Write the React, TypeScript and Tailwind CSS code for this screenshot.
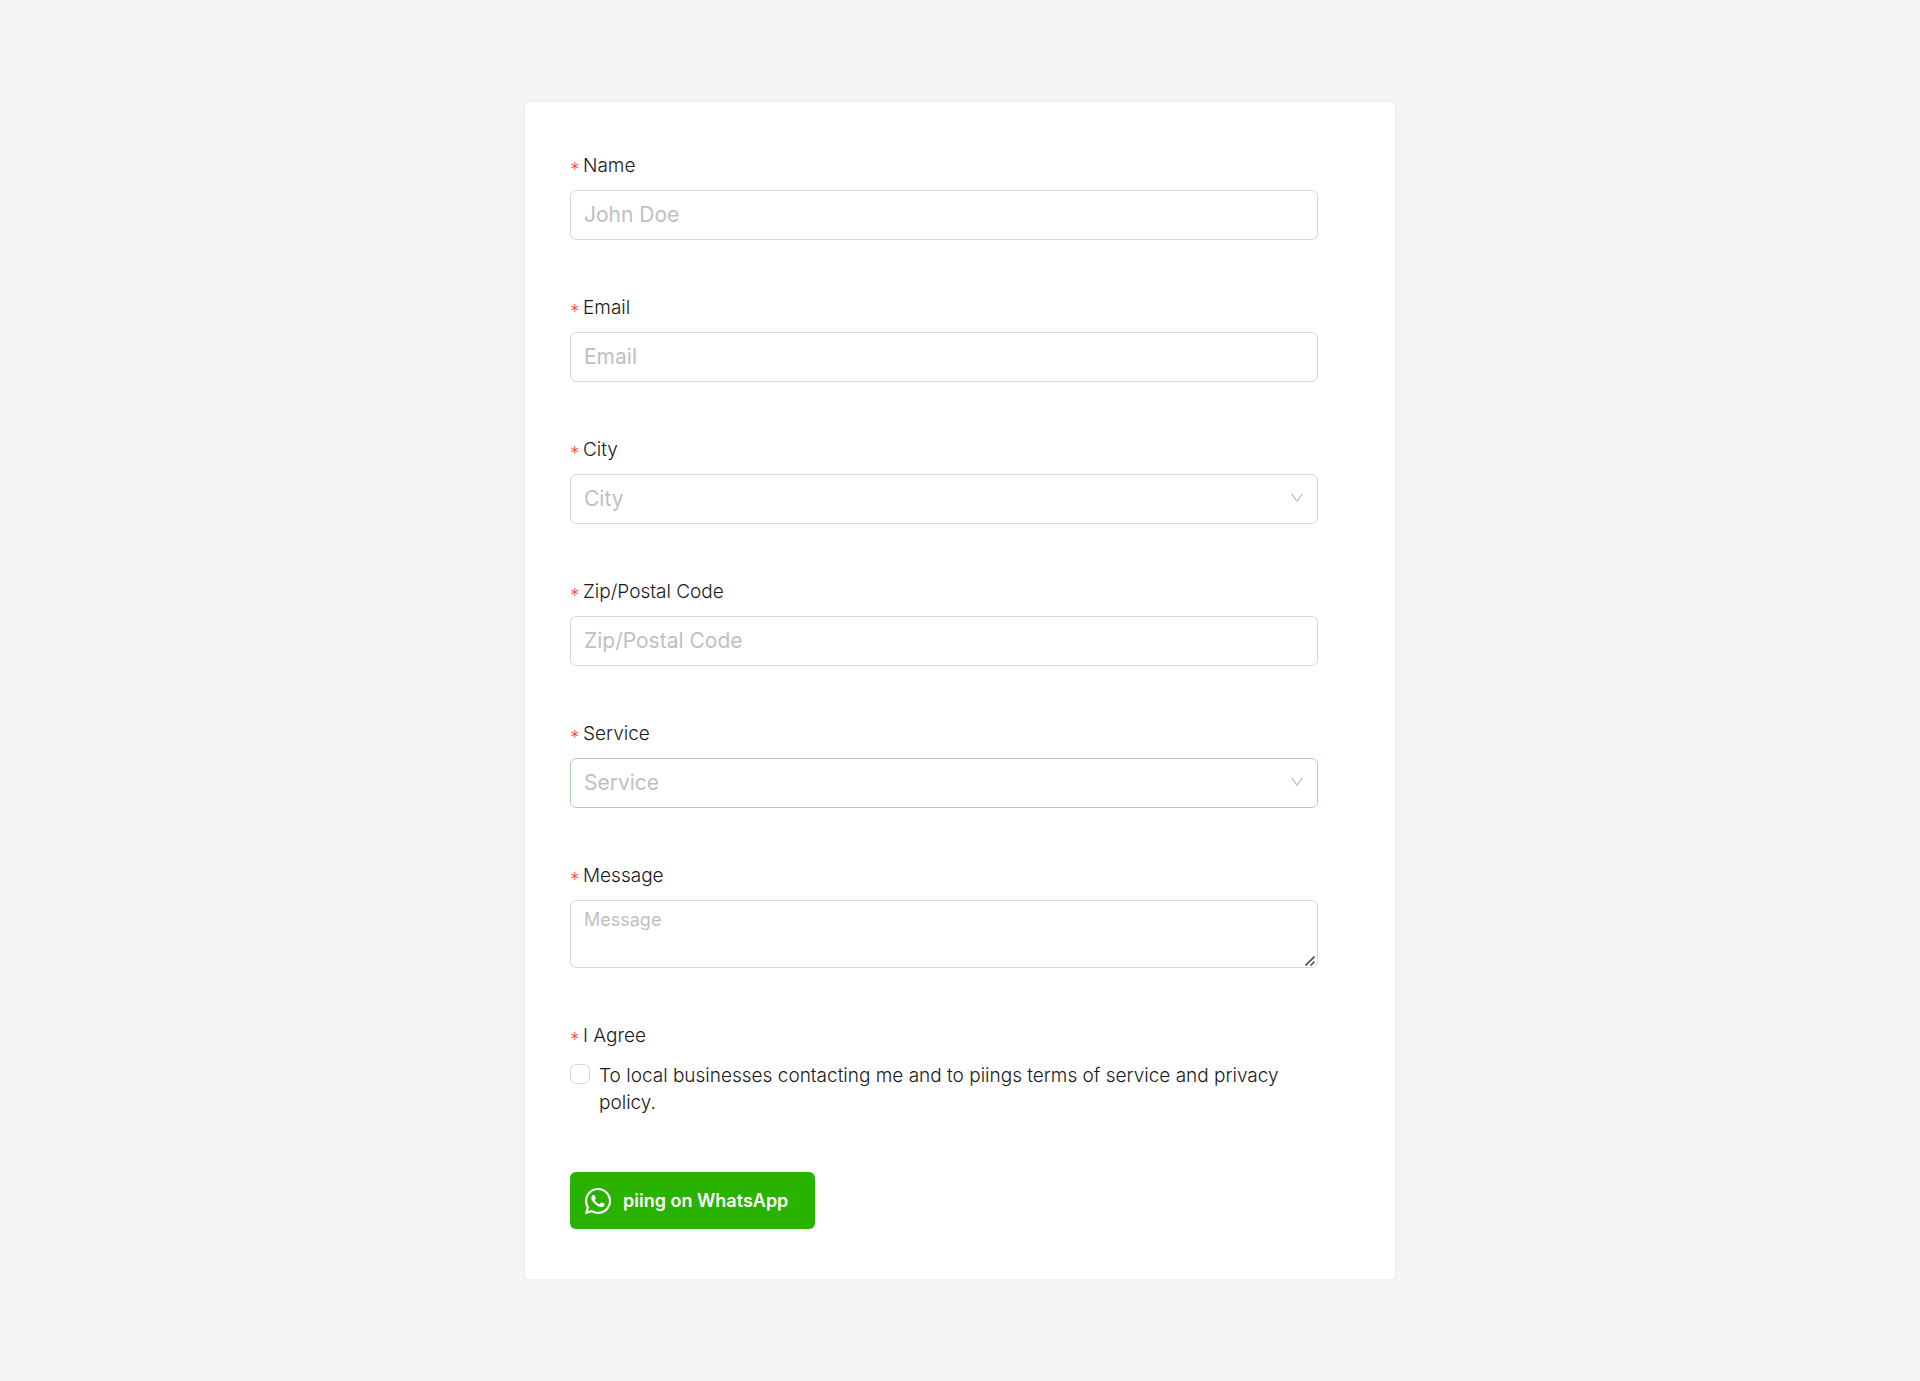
import React from "react";
import type { ReactNode } from "react";
import { AiOutlineDown } from "react-icons/ai";
import { FaWhatsapp } from "react-icons/fa";

const Label = ({ htmlFor, children }: { htmlFor: string; children: ReactNode }) => {
  return (
    <label htmlFor={htmlFor} className="mb-[11px] flex items-center gap-[5px] text-[19px] font-light leading-[27px]">
      <span className="w-2 pt-[7px] text-[19px] leading-[19px] text-[#ff4d4f]">*</span>
      {children}
    </label>
  );
};

const Field = ({ id, label, children }: { id: string; label: string; children: ReactNode }) => {
  return (
    <div className="mb-[54px]">
      <Label htmlFor={id}>{label}</Label>
      {children}
    </div>
  );
};

const TextField = ({ id, label, placeholder }: { id: string; label: string; placeholder: string }) => {
  return (
    <Field id={id} label={label}>
      <input
        id={id}
        type="text"
        placeholder={placeholder}
        className="block h-[50px] w-full rounded-md border border-[#d9d9d9] bg-white px-[13px] pb-0.5 text-[21px] outline-none placeholder:text-[#bfbfbf]"
      />
    </Field>
  );
};

const SelectField = ({ id, label, active }: { id: string; label: string; active?: boolean }) => {
  return (
    <Field id={id} label={label}>
      <div className="relative">
        <select
          id={id}
          defaultValue=""
          className={`block h-[50px] w-full appearance-none rounded-md border bg-white px-[13px] text-[21px] text-[#bfbfbf] outline-none ${
            active ? "border-[#b0d1a7]" : "border-[#d9d9d9]"
          }`}
        >
          <option value="">{label}</option>
        </select>
        <AiOutlineDown className="pointer-events-none absolute right-[13px] top-4 size-4 text-[#bfbfbf]" />
      </div>
    </Field>
  );
};

const App = () => {
  return (
    <main className="min-h-screen bg-[#f4f5f7] px-4 py-[100px] font-['Inter','Open_Sans',sans-serif] text-[#1a1a1a]">
      <form className="mx-auto max-w-[874px] rounded-md border-2 border-[#f0f0f2] bg-white py-[50px] pl-[45px] pr-[77px]">
        <TextField id="name" label="Name" placeholder="John Doe" />
        <TextField id="email" label="Email" placeholder="Email" />
        <SelectField id="city" label="City" />
        <TextField id="zip" label="Zip/Postal Code" placeholder="Zip/Postal Code" />
        <SelectField id="service" label="Service" active />
        <Field id="message" label="Message">
          <div className="relative">
            <textarea
              id="message"
              placeholder="Message"
              className="block h-[68px] w-full resize-y rounded-md border border-[#d9d9d9] bg-white px-[13px] py-[5px] text-[18px] leading-[27px] outline-none placeholder:text-[#bfbfbf] [&::-webkit-resizer]:hidden"
            />
            <svg
              viewBox="0 0 10 10"
              className="pointer-events-none absolute bottom-0.5 right-[3px] size-[10px]"
              fill="none"
              stroke="#4d4d4d"
              strokeWidth="1.6"
              aria-hidden="true"
            >
              <path d="M0.5 9.5 9.5 0.5M5.5 9.5 9.5 5.5" />
            </svg>
          </div>
        </Field>
        <Label htmlFor="agree">I Agree</Label>
        <div className="mb-14 flex items-start gap-[9px] pr-8 pt-0.5">
          <input
            id="agree"
            type="checkbox"
            className="mt-0.5 size-5 shrink-0 appearance-none rounded-md border border-[#d9d9d9] bg-white"
          />
          <label htmlFor="agree" className="text-[19px] font-light leading-[27px]">
            To local businesses contacting me and to piings terms of service and privacy policy.
          </label>
        </div>
        <button
          type="button"
          className="flex h-[57px] w-[245px] items-center gap-[10px] rounded-md bg-[#2ab200] pl-[13px] text-[18px] font-semibold text-white shadow-[0_2px_0_rgba(0,0,0,0.04)]"
        >
          <FaWhatsapp className="size-[30px]" />
          piing on WhatsApp
        </button>
      </form>
    </main>
  );
};

export default App;
